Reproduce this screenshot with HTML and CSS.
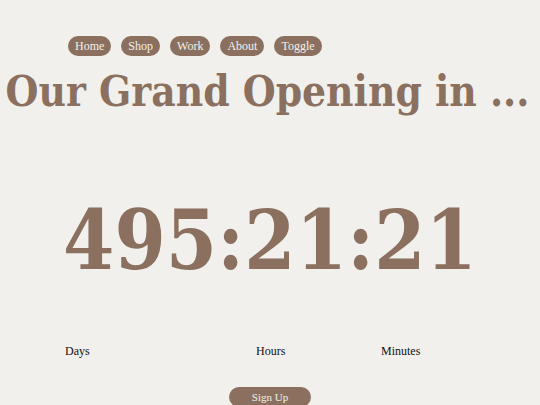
FILE: index.html
```html
<!DOCTYPE html>
<html>
<head>
<meta charset="utf-8">
<link rel="stylesheet" href="styles.css">
</head>
<body>
<nav class="nav">
  <a class="pill">Home</a>
  <a class="pill">Shop</a>
  <a class="pill">Work</a>
  <a class="pill">About</a>
  <a class="pill">Toggle</a>
</nav>
<h1 class="title">Our Grand Opening in ...</h1>
<div class="count">495:21:21</div>
<div class="labels">
  <span>Days</span>
  <span>Hours</span>
  <span>Minutes</span>
</div>
<div class="cta"><a class="signup">Sign Up</a></div>
</body>
</html>
```
FILE: styles.css
```css
html, body {
  margin: 0;
  padding: 0;
  background: #f1f0ec;
  overflow: hidden;
}
body {
  width: 540px;
  height: 405px;
  font-family: "DejaVu Serif", serif;
  font-stretch: condensed;
  color: #8b705f;
}
.nav {
  display: flex;
  gap: 10px;
  padding: 36px 0 0 68px;
}
.pill {
  display: inline-block;
  background: #8b705f;
  color: #f1f0ec;
  border-radius: 10px;
  height: 20px;
  line-height: 20px;
  padding: 0 7px;
  font-family: "Liberation Serif", serif;
  font-stretch: normal;
  font-size: 12px;
}
.title {
  margin: 8px 0 0;
  padding-right: 5px;
  text-align: center;
  font-size: 42px;
  line-height: 56px;
  font-weight: bold;
  white-space: nowrap;
}
.count {
  margin-top: 70px;
  text-align: center;
  font-size: 82px;
  line-height: 100px;
  font-weight: bold;
}
.labels {
  display: grid;
  grid-template-columns: 191px 125px auto;
  padding-left: 65px;
  margin-top: 54px;
  font-family: "Liberation Serif", serif;
  font-stretch: normal;
  font-size: 12px;
  color: #111;
}
.cta {
  display: flex;
  justify-content: center;
  margin-top: 28px;
}
.signup {
  display: inline-block;
  background: #8b705f;
  color: #f1f0ec;
  border-radius: 10px;
  width: 82px;
  height: 20px;
  line-height: 20px;
  text-align: center;
  font-family: "Liberation Serif", serif;
  font-stretch: normal;
  font-size: 11px;
}
```
